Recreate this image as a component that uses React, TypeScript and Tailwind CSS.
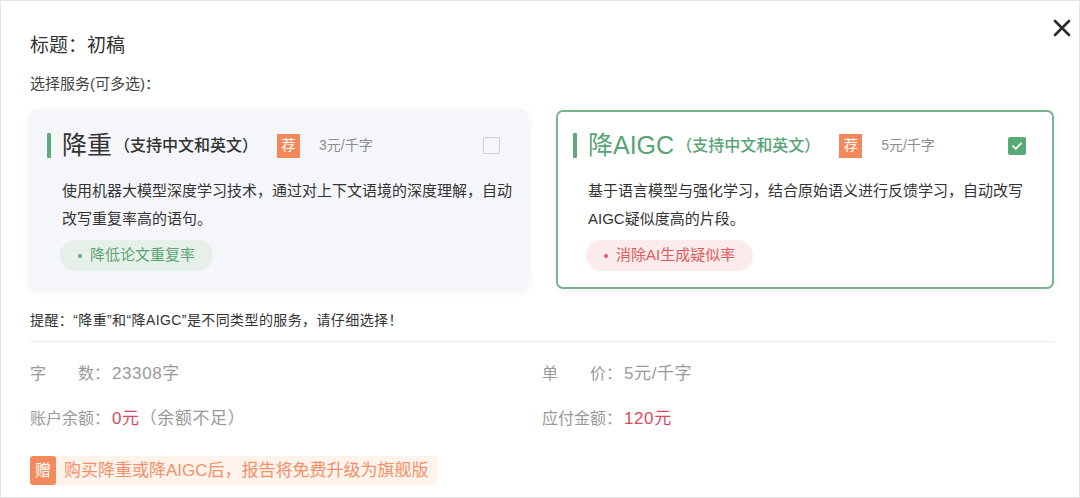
import React, { useState } from 'react';

const FONT = "font-['Liberation_Sans','Noto_Sans_CJK_SC',sans-serif]";

interface ServiceCardProps {
  name: string;
  price: string;
  lines: string[];
  tag: string;
  checked: boolean;
  tone: 'green' | 'red';
  onToggle: () => void;
}

const ServiceCard: React.FC<ServiceCardProps> = ({ name, price, lines, tag, checked, tone, onToggle }) => {
  const titleColor = checked ? 'text-[#58a475]' : 'text-[#333]';
  return (
    <div
      onClick={onToggle}
      className={`cursor-pointer rounded-[7px] pl-[15px] pr-[26px] pt-[21px] pb-[16px] ${
        checked
          ? 'bg-white border-2 border-[#79b48e] shadow-[0_2px_8px_rgba(0,0,0,0.06)]'
          : 'bg-[#f5f6f9] border-2 border-transparent shadow-[0_2px_8px_rgba(0,0,0,0.08)]'
      }`}
    >
      <div className="flex items-center h-[25px]">
        <span className="w-[4px] h-[25px] bg-[#5fa97a] rounded-[1px]" />
        <span className={`ml-[11px] text-[25px] leading-[25px] ${titleColor}`}>{name}</span>
        <span className={`text-[16px] font-medium ml-[2px] ${titleColor}`}>（支持中文和英文）</span>
        <span className="ml-[19px] w-[23px] h-[24px] bg-[#f4885b] text-white text-[14px] flex items-center justify-center">
          荐
        </span>
        <span className="ml-[19px] text-[14px] text-[#8e8e8e]">{price}</span>
        <span className="ml-auto">
          {checked ? (
            <span className="w-[18px] h-[18px] rounded-[2px] bg-[#59a878] flex items-center justify-center">
              <svg width="12" height="12" viewBox="0 0 12 12" fill="none">
                <path d="M2 6.2l2.7 2.6L10 3.4" stroke="white" strokeWidth="1.8" strokeLinecap="round" strokeLinejoin="round" />
              </svg>
            </span>
          ) : (
            <span className="block w-[17px] h-[17px] rounded-[2px] border border-[#cfcfcf] bg-[#f5f6f9]" />
          )}
        </span>
      </div>
      <div className="pl-[15px] mt-[19px] text-[15px] leading-[28px] text-[#333] whitespace-nowrap">
        {lines.map((l) => (
          <div key={l}>{l}</div>
        ))}
      </div>
      <div
        className={`ml-[13px] mt-[7px] inline-flex items-center h-[31px] px-[18px] rounded-full text-[15px] ${
          tone === 'green' ? 'bg-[#e7efe9] text-[#5aa472]' : 'bg-[#fcebeb] text-[#e05a5c]'
        }`}
      >
        <span className={`w-[4px] h-[4px] rounded-full mr-[8px] ${tone === 'green' ? 'bg-[#5aa472]' : 'bg-[#e05a5c]'}`} />
        {tag}
      </div>
    </div>
  );
};

// label + value line in the order summary
const InfoRow: React.FC<{ label: string; children: React.ReactNode }> = ({ label, children }) => (
  <div className="flex items-baseline text-[#999]">
    <span className="text-[16px]">{label}</span>
    <span className="ml-[2px] text-[17px] tracking-[0.6px]">{children}</span>
  </div>
);

export default function App() {
  const [dedup, setDedup] = useState(false);
  const [aigc, setAigc] = useState(true);

  return (
    <div className={`relative w-[1080px] h-[498px] bg-white border border-[#e4e4e4] overflow-hidden ${FONT}`}>
      <button className="absolute top-[17px] right-[7px] w-[20px] h-[20px] flex items-center justify-center">
        <svg width="18" height="18" viewBox="0 0 18 18" fill="none">
          <path d="M2 2l14 14M16 2L2 16" stroke="#2b2b2b" strokeWidth="2.6" strokeLinecap="round" />
        </svg>
      </button>

      <div className="pl-[29px] pr-[25px] pt-[32px]">
        <h2 className="text-[19px] leading-[26px] text-[#333]">标题：初稿</h2>
        <p className="mt-[14px] text-[15px] leading-[22px] text-[#444]">选择服务(可多选)：</p>

        <div className="mt-[15px] grid grid-cols-2 gap-[28px]">
          <ServiceCard
            name="降重"
            price="3元/千字"
            lines={['使用机器大模型深度学习技术，通过对上下文语境的深度理解，自动', '改写重复率高的语句。']}
            tag="降低论文重复率"
            checked={dedup}
            tone="green"
            onToggle={() => setDedup(!dedup)}
          />
          <ServiceCard
            name="降AIGC"
            price="5元/千字"
            lines={['基于语言模型与强化学习，结合原始语义进行反馈学习，自动改写', 'AIGC疑似度高的片段。']}
            tag="消除AI生成疑似率"
            checked={aigc}
            tone="red"
            onToggle={() => setAigc(!aigc)}
          />
        </div>

        <p className="mt-[21px] text-[14px] leading-[20px] text-[#333] tracking-[0.4px]">
          提醒：“降重”和“降AIGC”是不同类型的服务，请仔细选择！
        </p>
        <div className="mt-[11px] h-px bg-[#ececec]" />

        <div className="mt-[20px] grid grid-cols-2 gap-y-[21px] leading-[24px]">
          <InfoRow label="字　　数：">23308字</InfoRow>
          <InfoRow label="单　　价：">5元/千字</InfoRow>
          <InfoRow label="账户余额：">
            <span className="text-[#d94a5e]">0元</span>（余额不足）
          </InfoRow>
          <InfoRow label="应付金额：">
            <span className="text-[#d94a5e]">120元</span>
          </InfoRow>
        </div>

        <div className="mt-[25px] inline-flex items-center h-[29px] bg-[#fff3ec] rounded-[3px] pr-[8px]">
          <span className="w-[26px] h-[29px] bg-[#f4895d] rounded-[3px] text-white text-[16px] flex items-center justify-center">
            赠
          </span>
          <span className="ml-[8px] text-[17px] text-[#f29169]">购买降重或降AIGC后，报告将免费升级为旗舰版</span>
        </div>
      </div>
    </div>
  );
}
